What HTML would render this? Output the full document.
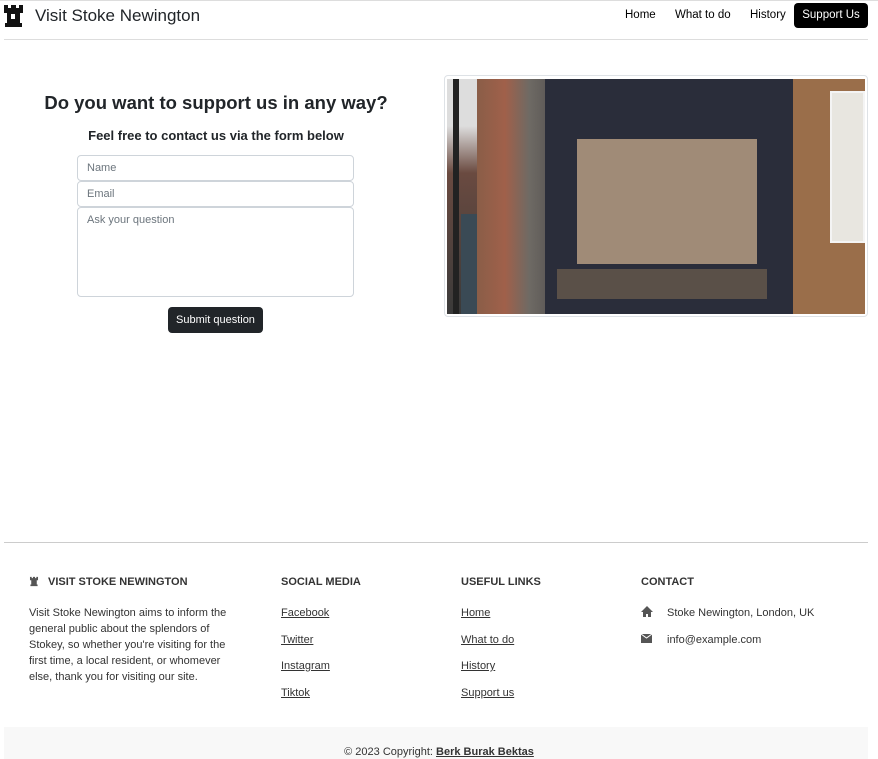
<!DOCTYPE html>
<html><head><meta charset="utf-8"><style>
*{box-sizing:border-box;margin:0;padding:0}
body{width:878px;height:759px;position:relative;background:#fff;font-family:"Liberation Sans",sans-serif;color:#212529;overflow:hidden}
.a{position:absolute}
.nav a{position:absolute;top:9px;font-size:11.5px;color:#000;text-decoration:none}
.f{font-size:11px;color:#333}
.h{font-size:11px;font-weight:bold;color:#333}
.l{position:absolute;font-size:11px;color:#333;text-decoration:underline}
</style></head><body>
<div class="a" style="left:0;top:0;width:878px;height:1px;background:#ddd"></div>
<svg class="a" style="left:3px;top:3px" width="21" height="26" viewBox="0 0 21 26"><path d="M1 2h4v3h3V2h5v3h3V2h4v8h-3v10h2v4H2v-4h2V10H1z" fill="#111"/><rect x="8" y="11" width="4" height="5" fill="#fff"/></svg>
<div class="a" style="left:35px;top:6px;font-size:17px;color:#212529">Visit Stoke Newington</div>
<div class="nav"><a style="left:625px">Home</a><a style="left:675px">What to do</a><a style="left:750px">History</a></div>
<div class="a" style="left:794px;top:3px;width:74px;height:25px;background:#000;border-radius:4px;color:#fff;font-size:11.5px;text-align:center;line-height:25px">Support Us</div>
<div class="a" style="left:4px;top:39px;width:864px;height:1px;background:#ddd"></div>
<div class="a" style="left:0;width:432px;top:92px;text-align:center;font-size:18.5px;font-weight:bold;color:#212529">Do you want to support us in any way?</div>
<div class="a" style="left:0;width:432px;top:128px;text-align:center;font-size:13px;font-weight:bold;color:#212529">Feel free to contact us via the form below</div>
<div class="a" style="left:77px;top:155px;width:277px;height:26px;border:1px solid #ced4da;border-radius:4px;font-size:11px;color:#6c757d;padding:6px 9px">Name</div>
<div class="a" style="left:77px;top:181px;width:277px;height:26px;border:1px solid #ced4da;border-radius:4px;font-size:11px;color:#6c757d;padding:6px 9px">Email</div>
<div class="a" style="left:77px;top:207px;width:277px;height:90px;border:1px solid #ced4da;border-radius:4px;font-size:11px;color:#6c757d;padding:6px 9px">Ask your question</div>
<div class="a" style="left:168px;top:307px;width:95px;height:26px;background:#212529;border-radius:4px;color:#fff;font-size:11px;text-align:center;line-height:26px">Submit question</div>
<div class="a" style="left:444px;top:75px;width:424px;height:242px;border:1px solid #dee2e6;border-radius:4px"></div>
<div class="a" style="left:447px;top:79px;width:418px;height:235px;background:#7a5040;overflow:hidden">
 <div class="a" style="left:0;top:0;width:30px;height:235px;background:linear-gradient(#ddd 20%,#6a4a40 40%,#3a3a3a)"></div>
 <div class="a" style="left:6px;top:0;width:6px;height:235px;background:#222"></div>
 <div class="a" style="left:30px;top:0;width:70px;height:235px;background:linear-gradient(90deg,#8a5e48,#a0604a 40%,#6e6a64 75%,#5e5a58)"></div>
 <div class="a" style="left:14px;top:135px;width:16px;height:100px;background:#3a4a55"></div>
 <div class="a" style="left:98px;top:0;width:248px;height:235px;background:#2a2d3a"></div>
 <div class="a" style="left:130px;top:60px;width:180px;height:125px;background:#b59c82;opacity:.85"></div>
 <div class="a" style="left:110px;top:190px;width:210px;height:30px;background:#5a5048"></div>
 <div class="a" style="left:346px;top:0;width:72px;height:235px;background:#9a6e4a"></div>
 <div class="a" style="left:383px;top:12px;width:35px;height:152px;background:#e8e6e0;border:2px solid #f4f4f4"></div>
</div>
<div class="a" style="left:4px;top:542px;width:864px;height:1px;background:#ccc"></div>
<svg class="a" style="left:29px;top:576px" width="10" height="11" viewBox="0 0 21 26"><path d="M1 2h4v3h3V2h5v3h3V2h4v8h-3v10h2v4H2v-4h2V10H1z" fill="#555"/></svg>
<div class="a h" style="left:48px;top:576px">VISIT STOKE NEWINGTON</div>
<div class="a f" style="left:29px;top:605px;width:200px;line-height:16px">Visit Stoke Newington aims to inform the general public about the splendors of Stokey, so whether you're visiting for the first time, a local resident, or whomever else, thank you for visiting our site.</div>
<div class="a h" style="left:281px;top:576px">SOCIAL MEDIA</div>
<div class="l" style="left:281px;top:607px">Facebook</div><div class="l" style="left:281px;top:634px">Twitter</div><div class="l" style="left:281px;top:660px">Instagram</div><div class="l" style="left:281px;top:687px">Tiktok</div>
<div class="a h" style="left:461px;top:576px">USEFUL LINKS</div>
<div class="l" style="left:461px;top:607px">Home</div><div class="l" style="left:461px;top:634px">What to do</div><div class="l" style="left:461px;top:660px">History</div><div class="l" style="left:461px;top:687px">Support us</div>
<div class="a h" style="left:641px;top:576px">CONTACT</div>
<svg class="a" style="left:641px;top:606px" width="12" height="11" viewBox="0 0 12 11"><path d="M6 0L0 6h2v5h3V8h2v3h3V6h2z" fill="#555"/></svg>
<div class="a f" style="left:667px;top:607px">Stoke Newington, London, UK</div>
<svg class="a" style="left:641px;top:634px" width="11" height="9" viewBox="0 0 11 9"><rect width="11" height="9" fill="#555"/><path d="M0 0l5.5 4L11 0" stroke="#fff" fill="none"/></svg>
<div class="a f" style="left:667px;top:634px">info@example.com</div>
<div class="a" style="left:4px;top:727px;width:864px;height:32px;background:#f8f8f8"></div>
<div class="a f" style="left:0;width:878px;top:746px;text-align:center">© 2023 Copyright: <b style="text-decoration:underline">Berk Burak Bektas</b></div>
</body></html>
